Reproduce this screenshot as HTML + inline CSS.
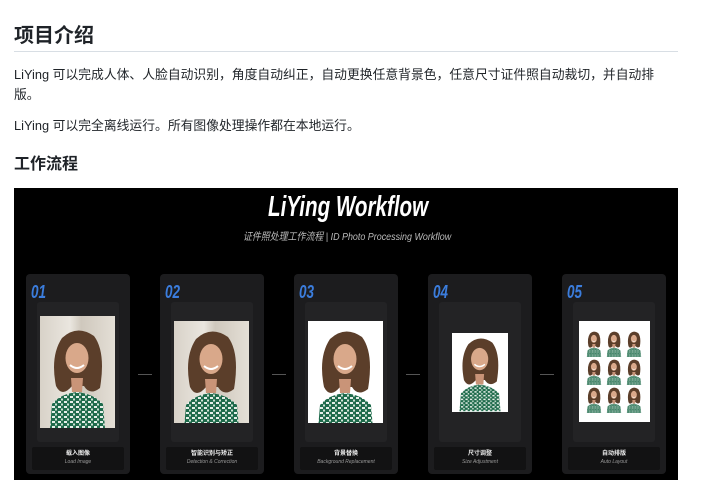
<!DOCTYPE html>
<html><head><meta charset="utf-8"><style>
*{margin:0;padding:0;box-sizing:border-box}
body{width:703px;height:495px;background:#fff;font-family:"Liberation Sans","Noto Sans CJK SC",sans-serif;color:#1f2328;position:relative;overflow:hidden}
.a{position:absolute;white-space:nowrap}
h1{position:absolute;left:14px;top:22px;font-size:20px;font-weight:bold;line-height:28px}
.hr{position:absolute;left:14px;top:51px;width:664px;height:1px;background:#d8dee4}
p{position:absolute;left:14px;font-size:12.8px;line-height:20px;white-space:nowrap}
h2{position:absolute;left:14px;top:154px;font-size:16px;font-weight:bold;line-height:22px}
.img{position:absolute;left:14px;top:188px;width:664px;height:292px;background:#000;overflow:hidden}
.card{position:absolute;top:86px;width:104px;height:200px;background:#1c1c1e;border-radius:4px}
.num{position:absolute;left:5px;top:8px;color:#3b7ddd;font-size:18px;font-style:italic;font-weight:bold;transform:scaleX(.75);transform-origin:left}
.panel{position:absolute;left:11px;top:28px;width:82px;height:140px;background:#232325;border-radius:3px}
.lab{position:absolute;left:6px;top:173px;width:92px;height:23px;background:#121213;border-radius:2px;text-align:center}
.l1{font-size:6px;color:#eee;font-weight:bold;line-height:8px;margin-top:3px}
.l2{font-size:5px;color:#999;line-height:8px;font-style:italic}
.arr{position:absolute;top:186px;width:14px;height:1px;background:#555}
</style></head><body>
<svg width="0" height="0" style="position:absolute"><defs>
<pattern id="pt" width="6" height="5" patternUnits="userSpaceOnUse"><rect width="6" height="5" fill="#1f6b4c"/><rect x="0" y="0" width="3" height="2" fill="#e6efe9"/><rect x="3" y="2.5" width="2" height="2" fill="#cfe3d6"/></pattern>
<symbol id="p" viewBox="0 0 75 112">
<path d="M10 112 L12 88 Q20 78 37 76 Q54 78 63 88 L65 112Z" fill="url(#pt)"/>
<path d="M16 70 Q10 40 22 22 Q37 8 54 20 Q66 36 60 72 Q50 80 44 70 L32 70 Q22 82 16 70Z" fill="#5b3e2a"/>
<ellipse cx="37" cy="42" rx="11.5" ry="15" fill="#d9a88a"/>
<path d="M30 49 Q37 55 44 49" stroke="#fff" stroke-width="2" fill="none"/>
<path d="M31 62 L43 62 L42 76 L32 76Z" fill="#c99478"/>
</symbol></defs></svg>

<h1>项目介绍</h1>
<div class="hr"></div>
<p style="top:65px">LiYing 可以完成人体、人脸自动识别，角度自动纠正，自动更换任意背景色，任意尺寸证件照自动裁切，并自动排</p>
<p style="top:85px">版。</p>
<p style="top:116px">LiYing 可以完全离线运行。所有图像处理操作都在本地运行。</p>
<h2>工作流程</h2>

<div class="img">
<div class="a" style="left:254px;top:3px;color:#fff;font-size:29px;font-weight:bold;font-style:italic;transform:scaleX(.71);transform-origin:left">LiYing Workflow</div>
<div class="a" style="left:229px;top:41px;color:#bbb;font-size:10.5px;font-style:italic;transform:scaleX(.85);transform-origin:left">证件照处理工作流程 | ID Photo Processing Workflow</div>

<div class="card" style="left:12px"><div class="num">01</div><div class="panel"></div>
<div class="a" style="left:14px;top:42px;width:75px;height:112px;background:linear-gradient(90deg,#d8d2c8,#eae6df 40%,#cfc8bd 55%,#e4dfd6)"><svg width="75" height="112"><use href="#p"/></svg></div>
<div class="lab"><div class="l1">载入图像</div><div class="l2">Load Image</div></div></div>
<div class="arr" style="left:124px"></div>

<div class="card" style="left:146px"><div class="num">02</div><div class="panel"></div>
<div class="a" style="left:14px;top:47px;width:75px;height:102px;background:linear-gradient(90deg,#d8d2c8,#eae6df 40%,#cfc8bd 55%,#e4dfd6)"><svg width="75" height="102" viewBox="0 4 75 102" preserveAspectRatio="none"><use href="#p" width="75" height="112"/></svg></div>
<div class="lab"><div class="l1">智能识别与矫正</div><div class="l2">Detection &amp; Correction</div></div></div>
<div class="arr" style="left:258px"></div>

<div class="card" style="left:280px"><div class="num">03</div><div class="panel"></div>
<div class="a" style="left:14px;top:47px;width:75px;height:102px;background:#fff"><svg width="75" height="102" viewBox="0 4 75 102" preserveAspectRatio="none"><use href="#p" width="75" height="112"/></svg></div>
<div class="lab"><div class="l1">背景替换</div><div class="l2">Background Replacement</div></div></div>
<div class="arr" style="left:392px"></div>

<div class="card" style="left:414px"><div class="num">04</div><div class="panel"></div>
<div class="a" style="left:24px;top:59px;width:56px;height:79px;background:#fff"><svg width="56" height="79" viewBox="0 8 75 104"><use href="#p" width="75" height="112"/></svg></div>
<div class="lab"><div class="l1">尺寸调整</div><div class="l2">Size Adjustment</div></div></div>
<div class="arr" style="left:526px"></div>

<div class="card" style="left:548px"><div class="num">05</div><div class="panel"></div>
<div class="a" style="left:17px;top:47px;width:71px;height:101px;background:#fff">
<svg width="71" height="101">
<g><svg x="5" y="9" width="20" height="27" viewBox="0 8 75 104"><use href="#p" width="75" height="112"/></svg>
<svg x="25" y="9" width="20" height="27" viewBox="0 8 75 104"><use href="#p" width="75" height="112"/></svg>
<svg x="45" y="9" width="20" height="27" viewBox="0 8 75 104"><use href="#p" width="75" height="112"/></svg>
<svg x="5" y="37" width="20" height="27" viewBox="0 8 75 104"><use href="#p" width="75" height="112"/></svg>
<svg x="25" y="37" width="20" height="27" viewBox="0 8 75 104"><use href="#p" width="75" height="112"/></svg>
<svg x="45" y="37" width="20" height="27" viewBox="0 8 75 104"><use href="#p" width="75" height="112"/></svg>
<svg x="5" y="65" width="20" height="27" viewBox="0 8 75 104"><use href="#p" width="75" height="112"/></svg>
<svg x="25" y="65" width="20" height="27" viewBox="0 8 75 104"><use href="#p" width="75" height="112"/></svg>
<svg x="45" y="65" width="20" height="27" viewBox="0 8 75 104"><use href="#p" width="75" height="112"/></svg></g>
</svg></div>
<div class="lab"><div class="l1">自动排版</div><div class="l2">Auto Layout</div></div></div>
</div>
</body></html>
